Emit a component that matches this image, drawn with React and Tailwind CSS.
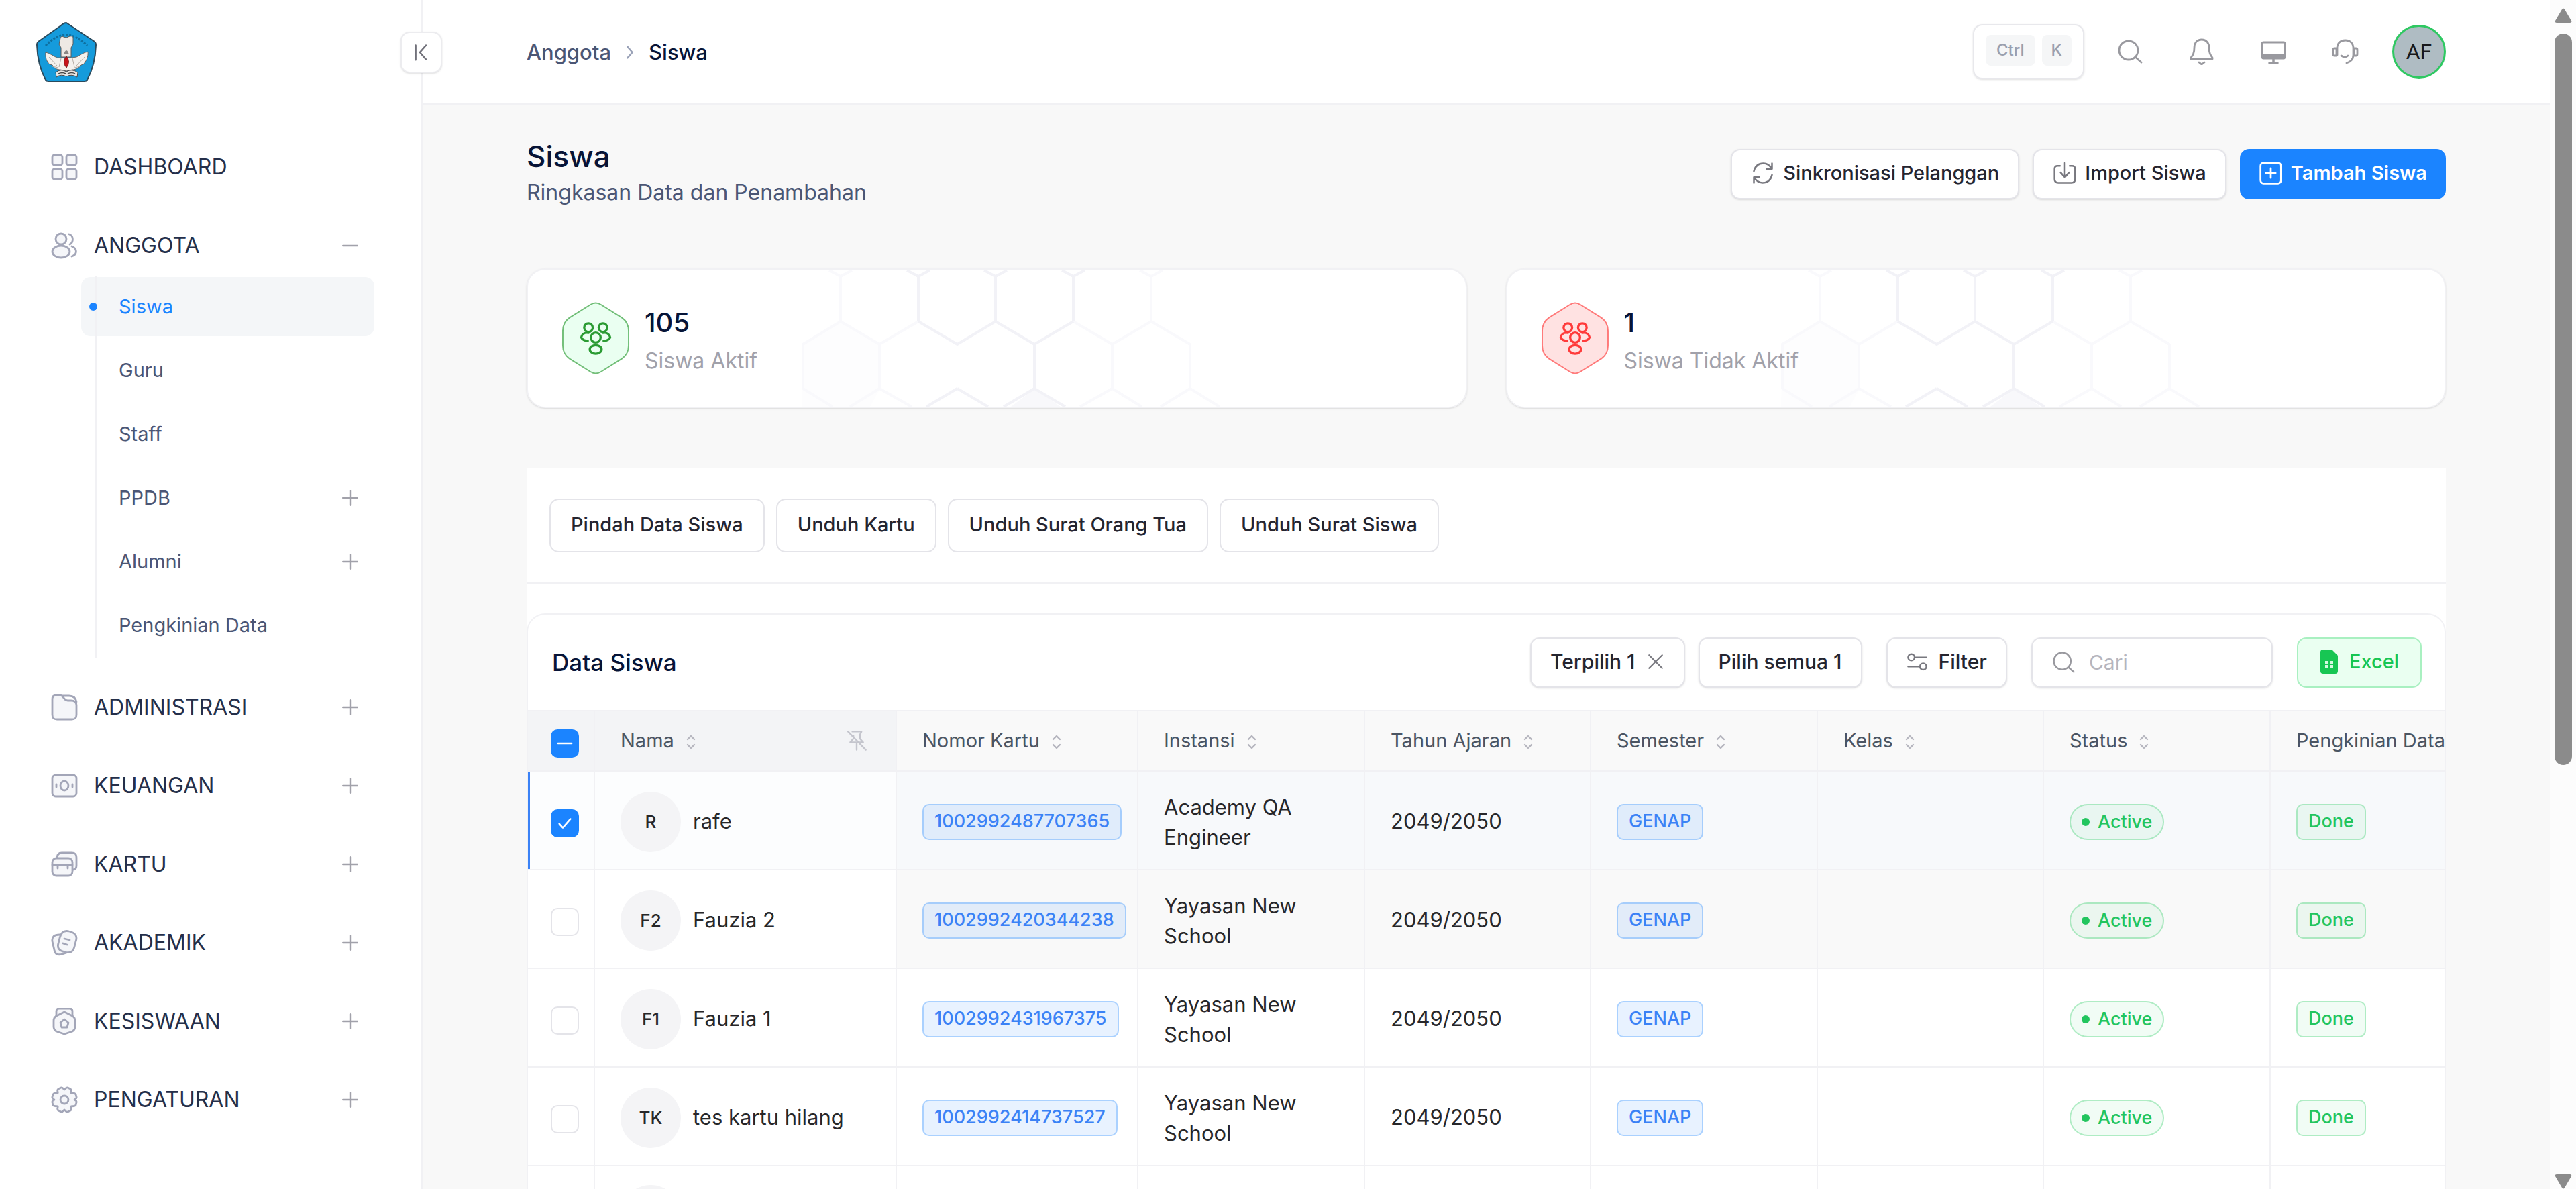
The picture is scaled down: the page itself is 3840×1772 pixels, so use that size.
import clsx from 'clsx';

const menus = [
  { label: 'DASHBOARD', icon: 'dashboard' },
  {
    label: 'ANGGOTA',
    icon: 'users',
    open: true,
    children: [
      { label: 'Siswa', active: true },
      { label: 'Guru' },
      { label: 'Staff' },
      { label: 'PPDB', expandable: true },
      { label: 'Alumni', expandable: true },
      { label: 'Pengkinian Data' },
    ],
  },
  { label: 'ADMINISTRASI', icon: 'folder', expandable: true },
  { label: 'KEUANGAN', icon: 'money', expandable: true },
  { label: 'KARTU', icon: 'cards', expandable: true },
  { label: 'AKADEMIK', icon: 'notes', expandable: true },
  { label: 'KESISWAAN', icon: 'medal', expandable: true },
  { label: 'PENGATURAN', icon: 'gear', expandable: true },
];

const students = [
  { id: 1, initials: 'R', name: 'rafe', card: '1002992487707365', school: 'Academy QA Engineer', selected: true },
  { id: 2, initials: 'F2', name: 'Fauzia 2', card: '1002992420344238', school: 'Yayasan New School', hovered: true },
  { id: 3, initials: 'F1', name: 'Fauzia 1', card: '1002992431967375', school: 'Yayasan New School' },
  { id: 4, initials: 'TK', name: 'tes kartu hilang', card: '1002992414737527', school: 'Yayasan New School' },
];

const columns = ['Nomor Kartu', 'Instansi', 'Tahun Ajaran', 'Semester', 'Kelas', 'Status', 'Pengkinian Data'];

const iconShapes = {
  dashboard: (
    <>
      <rect x="2" y="2" width="15" height="15" rx="3" />
      <rect x="23" y="2" width="15" height="15" rx="3" />
      <rect x="2" y="23" width="15" height="15" rx="3" />
      <rect x="23" y="23" width="15" height="15" rx="3" />
    </>
  ),
  users: (
    <>
      <circle cx="15" cy="10" r="8" />
      <ellipse cx="15" cy="29" rx="13" ry="9" />
      <path d="M27 3c7 2 7 12 1 15M31 21c8 3 9 12 0 15" fill="none" />
    </>
  ),
  folder: (
    <>
      <path d="M2 8c0-4 2-6 6-6h5c3 0 4 1 6 4s3 4 6 4h5c5 0 8 3 8 7v14c0 5-2 7-7 7H9c-5 0-7-2-7-7Z" />
      <path d="M17 3h10c6 0 10 3 11 9" fill="none" />
    </>
  ),
  money: (
    <>
      <rect x="2" y="4" width="36" height="32" rx="5" />
      <ellipse cx="20" cy="20" rx="6" ry="7" />
      <path d="M8 18v4M32 18v4" />
    </>
  ),
  cards: (
    <>
      <path d="M9 11c0-5 2-8 7-8h15c5 0 7 2 7 7v12c0 4-2 6-5 6" />
      <rect x="2" y="11" width="30" height="26" rx="6" />
      <path d="M2 21h30M10 21v5M25 21v5" />
    </>
  ),
  notes: (
    <>
      <path d="M13 8c-8 0-12 3-11 10l3 13c1 6 5 8 12 6l6-2" />
      <path d="M13 13c2-8 6-12 14-10 9 2 13 7 10 15l-2 8c-2 8-7 10-14 8-9-2-12-6-10-13Z" />
      <path d="m20 14 8 2M18 21l6 2" />
    </>
  ),
  medal: (
    <>
      <path d="M8 14V5c0-3 2-4 4-4h16c2 0 4 1 4 4v9" />
      <path d="m20 6 12 6c3 2 4 4 4 7v9c0 3-1 5-4 7l-12 4-12-4c-3-2-4-4-4-7v-9c0-3 1-5 4-7Z" />
      <path d="m20 17 6 5-2 7h-8l-2-7Z" />
    </>
  ),
  gear: (
    <>
      <path d="M15 2c3-1 4 3 5 3s2-4 5-3l4 2c3 2 0 5 1 6s5-1 7 2l1 4c1 3-3 3-3 4s4 1 3 4l-1 4c-2 3-6 1-7 2s2 4-1 6l-4 2c-3 1-4-3-5-3s-2 4-5 3l-4-2c-3-2 0-5-1-6s-5 1-7-2l-1-4c-1-3 3-3 3-4s-4-1-3-4l1-4c2-3 6-1 7-2s-2-4 1-6Z" />
      <circle cx="20" cy="20" r="6" />
    </>
  ),
};

function MenuIcon({ name }) {
  return (
    <svg viewBox="0 0 40 40" className="size-10 shrink-0" fill="#f5f6f9" stroke="#a3a6b8" strokeWidth="2.8" strokeLinecap="round" strokeLinejoin="round" aria-hidden="true">
      {iconShapes[name]}
    </svg>
  );
}

function Glyph({ className, children, width = 2.8 }) {
  return (
    <svg viewBox="0 0 40 40" className={clsx('shrink-0', className)} fill="none" stroke="currentColor" strokeWidth={width} strokeLinecap="round" strokeLinejoin="round" aria-hidden="true">
      {children}
    </svg>
  );
}

function PlusMinus({ open }) {
  return (
    <Glyph className="size-6 text-[#a1a1aa]" width={4}>
      <path d={open ? 'M2 20h36' : 'M2 20h36M20 2v36'} />
    </Glyph>
  );
}

function SortIcon() {
  return (
    <svg viewBox="0 0 14 22" className="mt-1 h-[22px] w-[14px] shrink-0 text-[#b5b5be]" fill="none" stroke="currentColor" strokeWidth="2.4" strokeLinecap="round" strokeLinejoin="round" aria-hidden="true">
      <path d="m2 7 5-5 5 5M2 15l5 5 5-5" />
    </svg>
  );
}

function SearchGlyph({ className }) {
  return (
    <Glyph className={className}>
      <circle cx="18" cy="18" r="14" />
      <path d="m28 28 9 8" />
    </Glyph>
  );
}

function Logo() {
  return (
    <svg viewBox="0 0 92 92" className="size-[92px]" role="img" aria-label="Tut Wuri Handayani">
      <path d="M46 2 88 30q2 2 2 5-1 30-13 52-1 2-4 2H19q-3 0-4-2Q3 65 2 35q0-3 2-5L38 6q4-4 8-4Z" fill="#159bdc" stroke="#2b4a5c" strokeWidth="2" strokeLinejoin="round" />
      <path d="M15 36Q45 4 77 36" fill="none" stroke="#0f6f9f" strokeWidth="3" strokeDasharray="3 2" />
      <path d="M37 25q1-4 5-2l4 1 5-2q5-1 5 3v9l-3 5v14h-15v-14l-3-5Z" fill="#eee9e4" stroke="#5c5a5a" strokeWidth="1" />
      <path d="M15 46c6 1 12 6 17 8l6 0h16l7-1c5-2 10-7 17-8 1 8-3 15-7 19l-3 1c-4 5-9 7-13 7l-9 2-9-2c-5 0-9-2-12-7l-4-1c-4-4-7-10-6-18Z" fill="#f4f1ed" stroke="#6b6663" strokeWidth="1" />
      <path d="M20 53l12 13M25 67l9 2M73 53 61 66M67 67l-9 2M38 55l-3 13M55 55l3 13" stroke="#b5aca4" strokeWidth="1" />
      <path d="M42 49q4-12 8 0Z" fill="#8b8785" />
      <path d="M46 52q7 8 0 17-7-9 0-17Z" fill="#c8151b" stroke="#7d1c1c" strokeWidth="1" />
      <path d="M30 76q8-6 16-1 8-5 17 1l-1 7q-8-5-16-1-8-4-15 1Z" fill="#e8e6e2" stroke="#4a4a4a" strokeWidth="1" />
      <path d="M34 78q6-3 11 0m3 0q6-3 11 0" fill="none" stroke="#4a4a4a" strokeWidth="1.5" />
    </svg>
  );
}

function Sidebar() {
  return (
    <aside className="relative z-10 w-[630px] shrink-0 border-r-2 border-[#f1f1f4] bg-white">
      <div className="flex h-[156px] items-center pl-[53px]">
        <a href="#beranda"><Logo /></a>
      </div>
      <button type="button" aria-label="Tutup menu" className="absolute top-[47px] -right-[31px] grid size-[62px] place-items-center rounded-[14px] border-2 border-[#ececef] bg-white text-[#71717a] shadow-sm">
        <Glyph className="size-7" width={3.6}>
          <path d="M8 5v31M30 5 17 20l13 15" />
        </Glyph>
      </button>

      <nav className="pt-[49px] pr-[70px] pl-[76px]">
        <ul className="flex flex-col gap-[29px]">
          {menus.map((menu) => (
            <li key={menu.label}>
              <a href="#menu" className="flex h-[88px] items-center gap-6 pr-6 text-[32px] text-[#252f4a]">
                <MenuIcon name={menu.icon} />
                <span className="grow">{menu.label}</span>
                {(menu.open || menu.expandable) && <PlusMinus open={menu.open} />}
              </a>
              {menu.children && (
                <ul className="relative mt-px ml-[45px] flex flex-col gap-[7px] pt-[2px] pb-[5px] before:absolute before:inset-y-0 before:left-[21px] before:w-[2px] before:bg-[#f1f1f4]">
                  {menu.children.map((child) => (
                    <li key={child.label}>
                      <a
                        href="#submenu"
                        className={clsx(
                          'flex h-[88px] items-center gap-8 rounded-[14px] pr-6 pl-3 text-[29px]',
                          child.active ? 'bg-[#f4f6f8] text-[#1b84ff]' : 'text-[#4b5675]'
                        )}
                      >
                        <span className={clsx('relative size-3 rounded-full', child.active && 'bg-[#1b84ff]')} />
                        <span className="grow">{child.label}</span>
                        {child.expandable && <PlusMinus />}
                      </a>
                    </li>
                  ))}
                </ul>
              )}
            </li>
          ))}
        </ul>
      </nav>
    </aside>
  );
}

function Topbar() {
  return (
    <header className="flex h-[156px] shrink-0 items-center justify-between border-b-2 border-[#f1f1f4] bg-white px-[155px]">
      <nav aria-label="Breadcrumb" className="flex items-center gap-4 pt-[2px] text-[31px] font-medium">
        <a href="#anggota" className="text-[#4b5675]">Anggota</a>
        <Glyph className="size-6 text-[#99a1b7]" width={4}><path d="m14 6 12 14-12 14" /></Glyph>
        <span className="text-[#071437]">Siswa</span>
      </nav>

      <div className="flex items-center">
        <button type="button" className="mr-12 flex h-[82px] items-start gap-[10px] rounded-[14px] border-2 border-[#e8e8ec] px-[17px] pt-[14px] text-2xl font-medium text-[#9a9fae] shadow-sm">
          <kbd className="flex h-[46px] items-center rounded-lg bg-[#f5f6f7] px-4 font-[Inter]">Ctrl</kbd>
          <kbd className="flex h-[46px] items-center rounded-lg bg-[#f5f6f7] px-[14px] font-[Inter]">K</kbd>
        </button>
        <div className="mr-[50px] flex items-center gap-[67px] text-[#99999f]">
          <button type="button" aria-label="Cari"><SearchGlyph className="size-10" /></button>
          <button type="button" aria-label="Notifikasi">
            <Glyph className="size-10">
              <path d="M20 2c-7 0-11 5-11 12 0 8-2 11-5 15v2h32v-2c-3-4-5-7-5-15 0-7-4-12-11-12ZM16 36l4 3 4-3" />
            </Glyph>
          </button>
          <button type="button" aria-label="Tampilan">
            <Glyph className="size-10">
              <rect x="3" y="6" width="34" height="24" rx="2" />
              <path d="M4 26h32" strokeWidth="6" />
              <path d="M20 30v6M14 37h12" strokeWidth="3.5" />
            </Glyph>
          </button>
          <button type="button" aria-label="Bantuan">
            <Glyph className="size-10">
              <path d="M8 25V15C8 7 13 3 20 3s12 4 12 12v10c0 6-3 10-10 12M14 26q6 4 10 0" />
              <path d="M7 15H4q-2 0-2 2v7q0 2 2 2h3ZM33 15h3q2 0 2 2v7q0 2-2 2h-3Z" />
            </Glyph>
          </button>
        </div>
        <button type="button" className="size-[80px] rounded-full border-[3px] border-[#2fc862] bg-[#afbcc3] font-[Roboto] text-[32px] text-[#18181b]">AF</button>
      </div>
    </header>
  );
}

function Button({ className, children }) {
  return (
    <button type="button" className={clsx('flex items-center rounded-[14px] border-2 pb-[2px] font-medium whitespace-nowrap', className)}>
      {children}
    </button>
  );
}

const outlineButton = 'h-[75px] gap-3 border-[#e4e4e9] bg-white px-7 text-[29px] text-[#252530] shadow-sm';
const toolbarButton = 'h-[75px] gap-4 border-[#e4e4e9] bg-white px-7 text-[30px] text-[#252530] shadow-sm';
const plainButton = 'h-[80px] border-[#e4e4e9] bg-white px-[30px] text-[29px] text-[#252530]';

function HexPattern() {
  return (
    <svg viewBox="0 0 760 204" className="pointer-events-none absolute top-0 left-[380px] h-[204px] w-[760px]" fill="none" strokeWidth="4" aria-hidden="true">
      <path d="M28 204 30 111 85 77 145 111V177L130 204H50Z" fill="#fdfdfe" />
      <path d="m340 204 36-27 38 27Z" fill="#f8f8fb" />
      <g stroke="#f9f9fc">
        <path d="M86 77V10l-17-9M86 10l17-9M549 77V10l-17-9M549 10l17-9" />
        <path d="M30 177v-66l56-34 58 34 58-34M433 77l58 34 58-34 58 34M607 111v66M491 111v66" />
        <path d="m30 177 44 27M144 111v66M144 177l-44 27M144 177l48 27M491 177l-48 27M491 177l44 27M607 177l-44 27M607 177l44 27" />
      </g>
      <g stroke="#f2f2f7">
        <path d="M202 77V10l-17-9M202 10l17-9M317 77V10l-17-9M317 10l17-9M433 77V10l-17-9M433 10l17-9" />
        <path d="m202 77 58 34 57-34 58 34 58-34M375 111v66M260 177l-46 27M260 177l46 27M375 177l-46 27M375 177l46 27" />
      </g>
    </svg>
  );
}

function StatCard({ value, label, tone }) {
  return (
    <div className="relative flex h-[208px] items-center overflow-hidden rounded-[28px] border-2 border-[#f1f1f4] bg-white pl-[50px] shadow-sm">
      <HexPattern />
      <svg viewBox="0 0 104 110" className={clsx('relative h-[108px] w-[102px]', tone === 'green' ? 'text-[#2b9b33]' : 'text-[#ff3b3b]')} fill="none" stroke="currentColor" aria-hidden="true">
        <path
          d="M44 4q8-5 16 0l32 20q10 7 10 20v22q0 13-10 20L60 106q-8 5-16 0L12 86Q2 79 2 66V44q0-13 10-20Z"
          fill={tone === 'green' ? '#eafff1' : '#ffe2e2'}
          strokeOpacity="0.65"
          strokeWidth="2"
        />
        <g strokeWidth="3.4" strokeLinecap="round">
          <circle cx="41" cy="39" r="6.5" />
          <circle cx="63" cy="39" r="6.5" />
          <circle cx="52" cy="54" r="7.5" />
          <ellipse cx="52" cy="72" rx="9" ry="6.5" />
          <path d="M41 47c-6-1-10 2-11 7 2 4 5 5 10 5M63 47c6-1 10 2 11 7-2 4-5 5-10 5" />
        </g>
      </svg>
      <div className="relative ml-[22px] pt-2">
        <div className="text-[40px] leading-[60px] font-medium text-[#071437]">{value}</div>
        <div className="text-[32px] leading-[54px] text-[#a1a1aa]">{label}</div>
      </div>
    </div>
  );
}

function Tick({ label, checked, mixed }) {
  return (
    <label className="mt-2 grid size-[42px] place-items-center">
      <input
        type="checkbox"
        defaultChecked={checked || mixed}
        aria-label={label}
        className="col-start-1 row-start-1 size-[42px] appearance-none rounded-[10px] border-2 border-[#e4e4e9] bg-white checked:border-[#1b84ff] checked:bg-[#1b84ff]"
      />
      {(checked || mixed) && (
        <Glyph className="pointer-events-none relative col-start-1 row-start-1 size-6 text-white" width={4}>
          <path d={mixed ? 'M3 20h34' : 'm6 21 9 10L34 9'} />
        </Glyph>
      )}
    </label>
  );
}

function Badge({ className, children }) {
  return (
    <span className={clsx('inline-flex h-[54px] items-center border-2 px-4 text-[27px] font-medium', className)}>
      {children}
    </span>
  );
}

const cell = 'border-r-2 border-b-2 border-[#f1f1f4] pl-[38px]';
const tickCell = 'border-r-2 border-b-2 border-[#f1f1f4] pl-[34px]';
const blueBadge = 'rounded-[10px] border-[#1b84ff]/30 bg-[#1b84ff]/10 text-[#3b82f6]';
const greenBadge = 'border-[#17c653]/30 bg-[#17c653]/6 text-[#22c55e]';

function StudentRow({ student }) {
  const tone = clsx('pt-1', student.selected && 'bg-[#f7f9fb]', student.hovered && 'bg-[#f9f9f9]');

  return (
    <tr className="h-[147px]">
      <td className={clsx(tickCell, student.selected && 'bg-[#fcfdfe] shadow-[inset_3px_0_0_#3b82f6]')}>
        <Tick label={student.name} checked={student.selected} />
      </td>
      <td className={clsx(cell, 'pt-1', student.selected && 'bg-[#fcfdfe]')}>
        <div className="flex items-center gap-[18px]">
          <span className="grid size-[90px] place-items-center rounded-full bg-[#f4f4f6] text-[26px] font-medium">{student.initials}</span>
          {student.name}
        </div>
      </td>
      <td className={clsx(cell, tone)}><Badge className={blueBadge}>{student.card}</Badge></td>
      <td className={clsx(cell, tone, 'pr-[38px] leading-[45px]')}>{student.school}</td>
      <td className={clsx(cell, tone)}>2049/2050</td>
      <td className={clsx(cell, tone)}><Badge className={blueBadge}>GENAP</Badge></td>
      <td className={clsx(cell, tone)} />
      <td className={clsx(cell, tone)}>
        <Badge className={clsx('gap-3 rounded-full', greenBadge)}>
          <span className="size-3 rounded-full bg-[#22c55e]" />
          Active
        </Badge>
      </td>
      <td className={clsx(cell, tone)}><Badge className={clsx('rounded-[10px]', greenBadge)}>Done</Badge></td>
    </tr>
  );
}

function StudentTable() {
  return (
    <table className="w-full min-w-[2936px] table-fixed border-separate border-spacing-0 text-[31px] text-[#27272a]">
      <colgroup>
        <col className="w-[100px]" />
        <col className="w-[450px]" />
        <col className="w-[360px]" />
        <col className="w-[338px]" />
        <col className="w-[337px]" />
        <col className="w-[338px]" />
        <col className="w-[337px]" />
        <col className="w-[338px]" />
        <col className="w-[338px]" />
      </colgroup>
      <thead>
        <tr className="h-[90px] text-left text-[29px] whitespace-nowrap text-[#4b5563]">
          <th className={clsx(tickCell, 'bg-[#f3f4f6]')}><Tick label="Pilih semua baris" mixed /></th>
          <th className={clsx(cell, 'bg-[#f3f4f6] pr-[42px] font-normal')}>
            <div className="flex items-center gap-[18px]">
              Nama <SortIcon />
              <Glyph className="ml-auto size-8 text-[#c4c5cd]" width={3}>
                <path d="m4 3 33 34M12 3h17l-3 6v7l6 7H8l6-7v-5M20 23v14" />
              </Glyph>
            </div>
          </th>
          {columns.map((column) => (
            <th key={column} className={clsx(cell, 'bg-[#f9f9f9] font-normal')}>
              <div className="flex items-center gap-[18px]">{column} <SortIcon /></div>
            </th>
          ))}
        </tr>
      </thead>
      <tbody>
        {students.map((student) => <StudentRow key={student.id} student={student} />)}
        <tr className="h-[147px]">
          <td className={tickCell} />
          <td className={cell}><span className="block size-[90px] rounded-full bg-[#f4f4f6]" /></td>
          {columns.map((column) => <td key={column} className={cell} />)}
        </tr>
      </tbody>
    </table>
  );
}

export default function App() {
  return (
    <div className="flex h-screen overflow-hidden bg-[#f8f8f8] font-[Inter,sans-serif]">
      <Sidebar />

      <div className="flex min-w-0 grow flex-col">
        <Topbar />
        <main className="px-[155px] pt-[49px]">
          <div className="flex items-center justify-between">
            <div>
              <h1 className="text-[44px] leading-[56px] font-medium text-[#071437]">Siswa</h1>
              <p className="text-[32px] leading-[52px] text-[#4b5675]">Ringkasan Data dan Penambahan</p>
            </div>
            <div className="flex gap-5">
              <Button className={outlineButton}>
                <Glyph className="size-9 text-[#78787f]">
                  <path d="M5 17C7 8 13 4 21 4c6 0 10 3 13 8M35 4v9h-9M35 23c-2 9-8 13-16 13-6 0-10-3-13-8M5 36v-9h9" />
                </Glyph>
                Sinkronisasi Pelanggan
              </Button>
              <Button className={outlineButton}>
                <Glyph className="size-9 text-[#78787f]">
                  <path d="M12 8H8q-5 0-5 5v17q0 6 6 6h22q6 0 6-6V13q0-5-5-5h-4M20 3v23M13 19l7 8 7-8" />
                </Glyph>
                Import Siswa
              </Button>
              <Button className="h-[75px] gap-3 border-[#1b84ff] bg-[#1b84ff] px-[26px] text-[29px] text-white">
                <Glyph className="size-9" width={3}>
                  <rect x="3" y="3" width="34" height="34" rx="5" />
                  <path d="M20 12v16M12 20h16" />
                </Glyph>
                <span className="font-semibold">Tambah Siswa</span>
              </Button>
            </div>
          </div>

          <div className="mt-[87px] grid grid-cols-2 gap-[58px]">
            <StatCard value="105" label="Siswa Aktif" tone="green" />
            <StatCard value="1" label="Siswa Tidak Aktif" tone="red" />
          </div>

          <div className="mt-[89px] bg-white">
            <div className="flex gap-[17px] border-b-2 border-[#f1f1f4] px-[34px] pt-[46px] pb-[45px]">
              <Button className={plainButton}>Pindah Data Siswa</Button>
              <Button className={plainButton}>Unduh Kartu</Button>
              <Button className={plainButton}>Unduh Surat Orang Tua</Button>
              <Button className={plainButton}>Unduh Surat Siswa</Button>
            </div>

            <section className="mt-[44px] overflow-hidden rounded-t-[28px] border-2 border-[#f1f1f4]">
              <div className="flex h-[144px] items-center justify-between border-b-2 border-[#f1f1f4] pr-[34px] pl-9">
                <h2 className="text-[35px] font-medium text-[#071437]">Data Siswa</h2>
                <div className="flex items-center">
                  <Button className={toolbarButton}>
                    Terpilih 1
                    <Glyph className="size-7 text-[#78787f]" width={3}><path d="m6 6 28 28M34 6 6 34" /></Glyph>
                  </Button>
                  <div className="ml-5"><Button className={toolbarButton}>Pilih semua 1</Button></div>
                  <div className="mx-9">
                    <Button className={toolbarButton}>
                      <Glyph className="size-8 text-[#78787f]" width={3}>
                        <circle cx="9" cy="12" r="6" />
                        <path d="M16 12h21M3 29h21" />
                        <circle cx="31" cy="29" r="6" />
                      </Glyph>
                      Filter
                    </Button>
                  </div>
                  <label className="flex h-[75px] w-[360px] items-center gap-5 rounded-[14px] border-2 border-[#e4e4e9] px-7 text-[#99999f] shadow-sm">
                    <SearchGlyph className="size-9" />
                    <input type="text" aria-label="Cari siswa" placeholder="Cari" className="min-w-0 grow text-[30px] outline-none placeholder:text-[#b5b5be]" />
                  </label>
                  <div className="ml-9">
                    <Button className="h-[75px] gap-4 border-[#a9f0c1] bg-[#eafff1] px-8 text-[29px] text-[#17c653]">
                      <svg viewBox="0 0 28 36" className="h-9 w-7" aria-hidden="true">
                        <path d="M1 4q0-4 4-4h13l9 9v23q0 4-4 4H5q-4 0-4-4Z" fill="#17c653" />
                        <path d="M8 17h5v4H8ZM15 17h5v4h-5ZM8 23h5v5H8ZM15 23h5v5h-5Z" fill="#d5f9e1" />
                      </svg>
                      Excel
                    </Button>
                  </div>
                </div>
              </div>
              <StudentTable />
            </section>
          </div>
        </main>
      </div>

      {/* scroll rail */}
      <div className="flex w-[39px] shrink-0 flex-col items-center bg-[#fcfcfc] pt-3" aria-hidden="true">
        <svg viewBox="0 0 26 22" className="h-[22px] w-[26px]" fill="#8b8b8b"><path d="M11 2q2-3 4 0l10 17q1 3-2 3H3q-3 0-2-3Z" /></svg>
        <div className="mt-4 h-[1090px] w-[26px] rounded-full bg-[#8b8b8b]" />
        <svg viewBox="0 0 26 22" className="mt-auto h-[22px] w-[26px]" fill="#8b8b8b"><path d="M11 20q2 3 4 0L25 3q1-3-2-3H3Q0 0 1 3Z" /></svg>
      </div>
    </div>
  );
}
